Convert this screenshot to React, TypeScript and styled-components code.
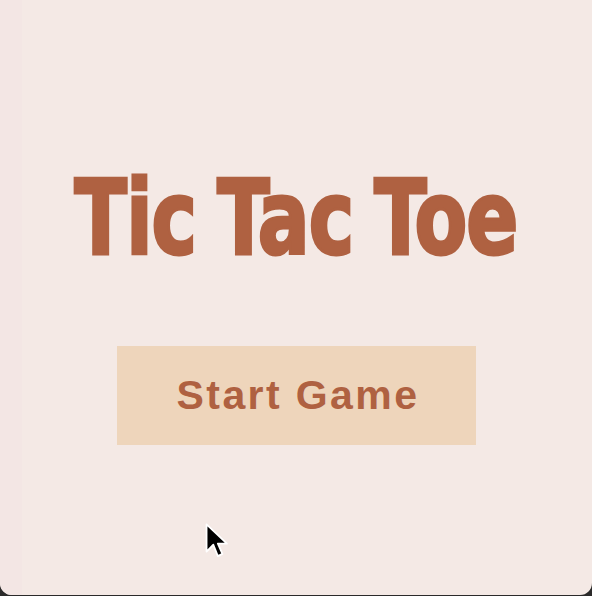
import React from "react";
import styled, { createGlobalStyle } from "styled-components";

const Global = createGlobalStyle`
  html, body { margin: 0; padding: 0; background: #2b2a2a; }
  body { width: 592px; height: 596px; overflow: hidden; }
`;

const Window = styled.div`
  position: relative;
  width: 592px;
  height: 595px;
  background: #f4e9e5;
  border-radius: 0 0 12px 12px;
  overflow: hidden;
  display: flex;
  flex-direction: column;
  align-items: center;
  padding-top: 166px;
  box-sizing: border-box;
  &::before {
    content: "";
    position: absolute;
    left: 0;
    top: 0;
    bottom: 0;
    width: 22px;
    background: #f3e6e4;
  }
`;

const Title = styled.h1`
  margin: 0;
  font-family: "DejaVu Sans Condensed", "DejaVu Sans", sans-serif;
  font-stretch: condensed;
  font-weight: 700;
  font-size: 104px;
  line-height: 104px;
  letter-spacing: -1px;
  word-spacing: -6px;
  color: #af6141;
  -webkit-text-stroke: 3px #af6141;
  transform: scaleX(0.82);
  white-space: nowrap;
`;

const StartButton = styled.button`
  margin-top: 76px;
  width: 359px;
  height: 99px;
  border: none;
  border-radius: 0;
  padding: 0 0 0 4px;
  background: #eed5bb;
  color: #af6141;
  font-family: "Liberation Sans", Arial, sans-serif;
  font-weight: 700;
  font-size: 41px;
  letter-spacing: 2.4px;
  cursor: pointer;
`;

const Cursor = styled.svg`
  position: absolute;
  left: 203px;
  top: 521px;
  width: 32px;
  height: 43px;
`;

export default function App() {
  return (
    <>
      <Global />
      <Window>
        <Title>Tic Tac Toe</Title>
        <StartButton>Start Game</StartButton>
        <Cursor viewBox="0 0 28 38">
          <path
            d="M3 3 L3 27 L9 21 L13 31 L17 29 L13 20 L21 20 Z"
            fill="#000"
            stroke="#fff"
            strokeWidth="1.6"
            strokeLinejoin="round"
          />
        </Cursor>
      </Window>
    </>
  );
}
